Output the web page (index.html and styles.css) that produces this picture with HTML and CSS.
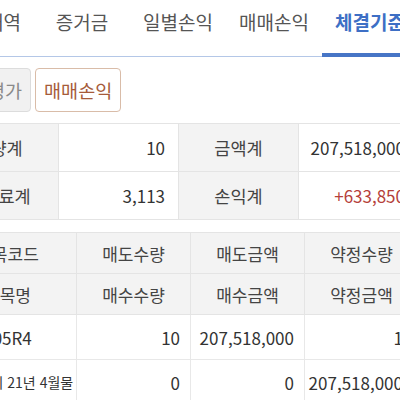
FILE: index.html
```html
<!DOCTYPE html>
<html lang="ko">
<head>
<meta charset="utf-8">
<link rel="stylesheet" href="styles.css">
</head>
<body>
<div class="page">
  <nav class="tabs">
    <div class="tab">거래내역</div>
    <div class="tab">증거금</div>
    <div class="tab">일별손익</div>
    <div class="tab">매매손익</div>
    <div class="tab active">체결기준</div>
  </nav>
  <div class="subtabs">
    <div class="sub">잔고평가</div>
    <div class="sub on">매매손익</div>
  </div>
  <table class="summary">
    <tr>
      <th>수량계</th><td>10</td>
      <th>금액계</th><td>207,518,000</td>
    </tr>
    <tr>
      <th>수수료계</th><td>3,113</td>
      <th>손익계</th><td class="plus">+633,850</td>
    </tr>
  </table>
  <table class="grid">
    <colgroup><col class="c1"><col class="c2"><col class="c2"><col class="c2"></colgroup>
    <thead>
      <tr><th>종목코드</th><th>매도수량</th><th>매도금액</th><th>약정수량</th></tr>
      <tr><th>종목명</th><th>매수수량</th><th>매수금액</th><th>약정금액</th></tr>
    </thead>
    <tbody>
      <tr><td class="code">105R4</td><td>10</td><td>207,518,000</td><td class="last">1</td></tr>
      <tr><td class="name">코스피미니 21년 4월물</td><td>0</td><td>0</td><td class="last">207,518,000</td></tr>
    </tbody>
  </table>
</div>
</body>
</html>
```

FILE: styles.css
```css
html, body {
  margin: 0;
  padding: 0;
  background: #fff;
  overflow: hidden;
}
body {
  width: 400px;
  height: 400px;
  font-family: "Noto Sans CJK KR", "Noto Sans", sans-serif;
  color: #333;
}
.page {
  margin-left: -62px;
  width: 480px;
}
.tabs {
  display: flex;
  height: 57px;
  border-bottom: 1px solid #b4c7e7;
  box-sizing: border-box;
}
.tab {
  width: 96px;
  flex: none;
  text-align: center;
  font-size: 19px;
  line-height: 44px;
  color: #555;
  box-sizing: border-box;
  white-space: nowrap;
}
.tab.active {
  color: #3d6fc5;
  font-weight: bold;
  height: 57px;
  border-bottom: 4px solid #4775c6;
}
.subtabs {
  display: flex;
  gap: 4px;
  padding-left: 7px;
  margin-top: 11px;
}
.sub {
  height: 44px;
  line-height: 42px;
  padding: 0 8px;
  font-size: 18.5px;
  border: 1px solid #dcdcdc;
  border-radius: 4px;
  background: #f1f1f1;
  color: #8a8a8a;
  box-sizing: border-box;
  white-space: nowrap;
}
.sub.on {
  background: #fff;
  border-color: #d9bca8;
  color: #a65b3a;
}
table {
  border-collapse: collapse;
  table-layout: fixed;
  width: 480px;
}
.summary {
  margin-top: 11px;
}
.summary th, .summary td {
  width: 120px;
  height: 48px;
  border: 1px solid #e4e4e4;
  font-weight: normal;
  padding: 0;
  box-sizing: border-box;
}
.summary th {
  background: #f3f3f3;
  color: #444;
  text-align: center;
  font-size: 17.5px;
}
.summary td {
  text-align: right;
  padding-right: 13px;
  color: #333;
  font-size: 17px;
}
.summary td.plus {
  color: #b5403a;
}
.grid {
  margin-top: 12px;
}
.grid col.c1 { width: 138px; }
.grid col.c2 { width: 114px; }
.grid th {
  background: #f3f3f3;
  font-weight: normal;
  font-size: 17px;
  color: #444;
  height: 40px;
  border: 1px solid #e4e4e4;
  padding: 0;
}
.grid td {
  height: 44px;
  border: 1px solid #e8e8e8;
  font-size: 17px;
  text-align: right;
  padding: 0 10px 0 0;
  color: #333;
  white-space: nowrap;
  overflow: hidden;
}
.grid td.last {
  padding-right: 15px;
}
.grid td.code {
  text-align: center;
  padding: 0;
}
.grid td.name {
  text-align: right;
  padding-right: 8px;
  font-size: 14px;
}
```
